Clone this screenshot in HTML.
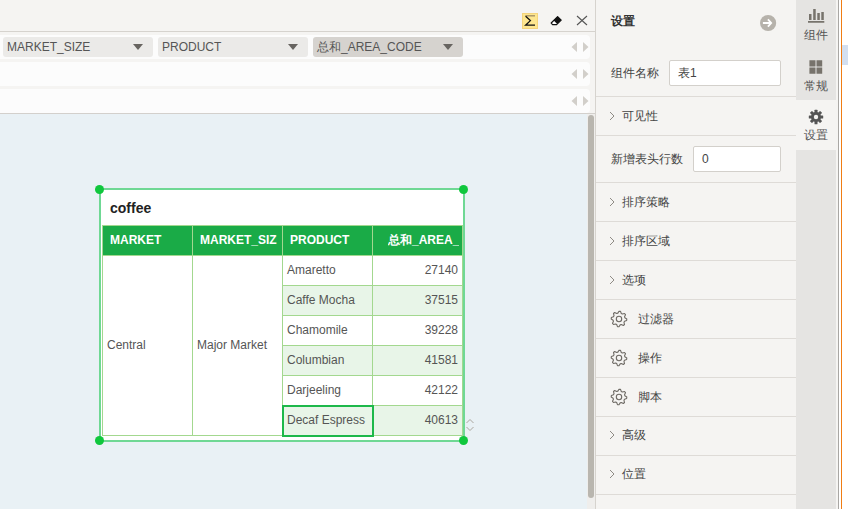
<!DOCTYPE html>
<html><head><meta charset="utf-8">
<style>
*{margin:0;padding:0;box-sizing:border-box}
html,body{width:848px;height:509px;overflow:hidden;background:#fff;font-family:"Liberation Sans",sans-serif;font-size:12px;color:#333}
.a{position:absolute}
#left{left:0;top:0;width:595px;height:509px;background:#f5f4f2;overflow:hidden}
.row{left:0;width:590px;height:24px;background:#fcfcfc;border-radius:0 4px 4px 0}
.dd{top:2px;height:20px;width:150px;background:#ebeae8;border-radius:3px;color:#555;line-height:20px;padding-left:4px;white-space:nowrap}
.dd .tri{position:absolute;right:10px;top:7px;width:0;height:0;border-left:5.5px solid transparent;border-right:5.5px solid transparent;border-top:6px solid #676460}
.arr{left:571px;top:7px;width:18px;height:10px}
.hd{height:30px;line-height:30px;color:#fff;font-weight:bold;white-space:nowrap}
.td{height:29px;line-height:29px;color:#555;white-space:nowrap}
.dot{width:9px;height:9px;border-radius:50%;background:#10c73d}
#panel{left:595px;top:0;width:201px;height:509px;background:#f5f4f2;border-left:1px solid #d6d3ce}
.sep{left:0;width:200px;height:1px;background:#dedbd7}
.lbl{left:15px;color:#444;font-size:12px;line-height:14px;white-space:nowrap}
#side{left:796px;top:0;width:40px;height:509px;background:#e5e4e2}
.tab{left:796px;width:40px;text-align:center;color:#555;font-size:12px;line-height:14px}
</style></head><body>
<div id="left" class="a">
  <div class="a" style="left:0;top:31px;width:595px;height:1px;background:#d6d3ce"></div>
  <div class="a" style="left:522px;top:13px;width:16px;height:16px;background:#fde68f;border:1px solid #f4d47c"></div>
  <svg class="a" style="left:516px;top:8px" width="30" height="24" viewBox="516 8 30 24"><path d="M525.3 15.8 H535" stroke="#a89466" stroke-width="1.4"/><path d="M525.6 16.2 L530.4 20.6 L525.6 25.2 H535" stroke="#111" stroke-width="1.3" fill="none"/></svg>
  <svg class="a" style="left:548px;top:10px" width="16" height="18" viewBox="548 10 16 18"><path d="M557.6 16.6 L561.2 20.1 L556.6 24.6 L552.6 24.6 L551.2 23 Z" fill="#fff" stroke="#111" stroke-width="1.2" stroke-linejoin="round"/><path d="M557.6 16.6 L561.2 20.1 L557.2 24.1 L553.7 20.5 Z" fill="#111"/></svg>
  <svg class="a" style="left:576px;top:15px" width="12" height="11" viewBox="576 15 12 11"><path d="M577 16 L587 25 M587 16 L577 25" stroke="#555" stroke-width="1.1"/></svg>

  <div class="a row" style="top:35px">
    <div class="a dd" style="left:3px">MARKET_SIZE<span class="tri"></span></div>
    <div class="a dd" style="left:158px">PRODUCT<span class="tri"></span></div>
    <div class="a dd" style="left:313px;background:#d6d3cf">总和_AREA_CODE<span class="tri"></span></div>
    <svg class="a arr" viewBox="0 0 18 10"><path d="M6 0 L0.5 5 L6 10Z M12 0 L17.5 5 L12 10Z" fill="#d2cfca"/></svg>
  </div>
  <div class="a row" style="top:62px">
    <svg class="a arr" viewBox="0 0 18 10"><path d="M6 0 L0.5 5 L6 10Z M12 0 L17.5 5 L12 10Z" fill="#d2cfca"/></svg>
  </div>
  <div class="a row" style="top:89px">
    <svg class="a arr" viewBox="0 0 18 10"><path d="M6 0 L0.5 5 L6 10Z M12 0 L17.5 5 L12 10Z" fill="#d2cfca"/></svg>
  </div>
  <div class="a" style="left:0;top:113px;width:595px;height:1px;background:#d3d0cc"></div>
  <div class="a" style="left:0;top:114px;width:587px;height:395px;background:#e9f1f5"></div>
  <div class="a" style="left:587px;top:114px;width:8px;height:395px;background:#efeeec"></div>
  <div class="a" style="left:588px;top:115px;width:6px;height:383px;background:#b9b6af;border-radius:3px"></div>
<div class="a" style="left:99px;top:189px;width:366px;height:253px;background:#fff"></div>
<div class="a" style="left:102px;top:225px;width:361px;height:31px;background:#1aab47"></div>
<div class="a" style="left:283px;top:286px;width:179px;height:29px;background:#e8f5e8"></div>
<div class="a" style="left:283px;top:346px;width:179px;height:29px;background:#e8f5e8"></div>
<div class="a" style="left:283px;top:406px;width:179px;height:29px;background:#e8f5e8"></div>
<div class="a" style="left:102px;top:225px;width:1px;height:211px;background:#a3d88f"></div>
<div class="a" style="left:192px;top:225px;width:1px;height:211px;background:#a3d88f"></div>
<div class="a" style="left:282px;top:225px;width:1px;height:211px;background:#a3d88f"></div>
<div class="a" style="left:372px;top:225px;width:1px;height:211px;background:#a3d88f"></div>
<div class="a" style="left:462px;top:225px;width:1px;height:211px;background:#a3d88f"></div>
<div class="a" style="left:102px;top:225px;width:361px;height:1px;background:#a3d88f"></div>
<div class="a" style="left:102px;top:255px;width:361px;height:1px;background:#a3d88f"></div>
<div class="a" style="left:282px;top:285px;width:181px;height:1px;background:#a3d88f"></div>
<div class="a" style="left:282px;top:315px;width:181px;height:1px;background:#a3d88f"></div>
<div class="a" style="left:282px;top:345px;width:181px;height:1px;background:#a3d88f"></div>
<div class="a" style="left:282px;top:375px;width:181px;height:1px;background:#a3d88f"></div>
<div class="a" style="left:282px;top:405px;width:181px;height:1px;background:#a3d88f"></div>
<div class="a" style="left:102px;top:435px;width:361px;height:1px;background:#a3d88f"></div>
<div class="a hd" style="left:110px;top:225px">MARKET</div>
<div class="a hd" style="left:200px;top:225px;width:77px;overflow:hidden">MARKET_SIZE</div>
<div class="a hd" style="left:290px;top:225px">PRODUCT</div>
<div class="a hd" style="left:388px;top:225px;width:71px;overflow:hidden">总和_AREA_CODE</div>
<div class="a td" style="left:287px;top:256px">Amaretto</div>
<div class="a td" style="left:373px;top:256px;width:85px;text-align:right">27140</div>
<div class="a td" style="left:287px;top:286px">Caffe Mocha</div>
<div class="a td" style="left:373px;top:286px;width:85px;text-align:right">37515</div>
<div class="a td" style="left:287px;top:316px">Chamomile</div>
<div class="a td" style="left:373px;top:316px;width:85px;text-align:right">39228</div>
<div class="a td" style="left:287px;top:346px">Columbian</div>
<div class="a td" style="left:373px;top:346px;width:85px;text-align:right">41581</div>
<div class="a td" style="left:287px;top:376px">Darjeeling</div>
<div class="a td" style="left:373px;top:376px;width:85px;text-align:right">42122</div>
<div class="a td" style="left:287px;top:406px">Decaf Espress</div>
<div class="a td" style="left:373px;top:406px;width:85px;text-align:right">40613</div>
<div class="a td" style="left:107px;top:331px">Central</div>
<div class="a td" style="left:197px;top:331px">Major Market</div>
<div class="a" style="left:282px;top:405px;width:92px;height:32px;border:2px solid #1db84a"></div>
<div class="a" style="left:99px;top:188px;width:366px;height:254px;border:2px solid #6fd894"></div>
<div class="a dot" style="left:95.30px;top:185.00px"></div>
<div class="a dot" style="left:459.40px;top:185.00px"></div>
<div class="a dot" style="left:95.30px;top:436.40px"></div>
<div class="a dot" style="left:459.40px;top:436.40px"></div>
<div class="a" style="left:110px;top:200px;font-size:14px;font-weight:bold;color:#222;line-height:16px">coffee</div>
<svg class="a" style="left:465px;top:417px" width="10" height="16" viewBox="0 0 10 16"><path d="M1.5 6 L5 2.5 L8.5 6 M1.5 10 L5 13.5 L8.5 10" stroke="#aba79f" stroke-width="1" fill="none"/></svg>
</div>

<div id="panel" class="a">
  <div class="a" style="left:15px;top:14px;font-size:12px;font-weight:bold;color:#333;line-height:14px">设置</div>
  <svg class="a" style="left:163px;top:14px" width="18" height="18" viewBox="0 0 18 18"><circle cx="9.1" cy="9.0" r="8.1" fill="#b6b2ab"/><path d="M3.9 9 H12.2 M8.9 5.4 L12.2 9 L8.9 12.6" stroke="#fff" stroke-width="1.8" fill="none"/></svg>
  <div class="a lbl" style="top:66px">组件名称</div>
  <div class="a" style="left:73px;top:60px;width:112px;height:26px;background:#fff;border:1px solid #d3d0cb;border-radius:2px;padding-left:8px;line-height:25px;color:#444">表1</div>
  <div class="a lbl" style="top:152px">新增表头行数</div>
  <div class="a" style="left:97px;top:146px;width:88px;height:26px;background:#fff;border:1px solid #d3d0cb;border-radius:2px;padding-left:8px;line-height:25px;color:#444">0</div>
<div class="a sep" style="top:96px"></div>
<div class="a sep" style="top:135px"></div>
<div class="a sep" style="top:182px"></div>
<div class="a sep" style="top:221px"></div>
<div class="a sep" style="top:260px"></div>
<div class="a sep" style="top:299px"></div>
<div class="a sep" style="top:338px"></div>
<div class="a sep" style="top:377px"></div>
<div class="a sep" style="top:416px"></div>
<div class="a sep" style="top:455px"></div>
<div class="a sep" style="top:494px"></div>
<svg class="a" style="left:13px;top:111px" width="6" height="10" viewBox="0 0 6 10"><path d="M1 1 L5 5 L1 9" stroke="#8f8b85" stroke-width="1" fill="none"/></svg>
<div class="a lbl" style="left:26px;top:109px">可见性</div>
<svg class="a" style="left:13px;top:197px" width="6" height="10" viewBox="0 0 6 10"><path d="M1 1 L5 5 L1 9" stroke="#8f8b85" stroke-width="1" fill="none"/></svg>
<div class="a lbl" style="left:26px;top:195px">排序策略</div>
<svg class="a" style="left:13px;top:236px" width="6" height="10" viewBox="0 0 6 10"><path d="M1 1 L5 5 L1 9" stroke="#8f8b85" stroke-width="1" fill="none"/></svg>
<div class="a lbl" style="left:26px;top:234px">排序区域</div>
<svg class="a" style="left:13px;top:275px" width="6" height="10" viewBox="0 0 6 10"><path d="M1 1 L5 5 L1 9" stroke="#8f8b85" stroke-width="1" fill="none"/></svg>
<div class="a lbl" style="left:26px;top:273px">选项</div>
<svg class="a" style="left:14px;top:310px" width="18" height="18" viewBox="0 0 18 18"><path d="M9.00 1.20 L10.52 1.35 L11.30 3.46 L12.33 4.01 L14.52 3.48 L15.49 4.67 L14.54 6.70 L14.88 7.83 L16.80 9.00 L16.65 10.52 L14.54 11.30 L13.99 12.33 L14.52 14.52 L13.33 15.49 L11.30 14.54 L10.17 14.88 L9.00 16.80 L7.48 16.65 L6.70 14.54 L5.67 13.99 L3.48 14.52 L2.51 13.33 L3.46 11.30 L3.12 10.17 L1.20 9.00 L1.35 7.48 L3.46 6.70 L4.01 5.67 L3.48 3.48 L4.67 2.51 L6.70 3.46 L7.83 3.12Z" stroke="#6f6b65" stroke-width="1.1" fill="none" stroke-linejoin="round"/><circle cx="9" cy="9" r="2.7" stroke="#6f6b65" stroke-width="1.1" fill="none"/></svg>
<div class="a lbl" style="left:42px;top:312px">过滤器</div>
<svg class="a" style="left:14px;top:349px" width="18" height="18" viewBox="0 0 18 18"><path d="M9.00 1.20 L10.52 1.35 L11.30 3.46 L12.33 4.01 L14.52 3.48 L15.49 4.67 L14.54 6.70 L14.88 7.83 L16.80 9.00 L16.65 10.52 L14.54 11.30 L13.99 12.33 L14.52 14.52 L13.33 15.49 L11.30 14.54 L10.17 14.88 L9.00 16.80 L7.48 16.65 L6.70 14.54 L5.67 13.99 L3.48 14.52 L2.51 13.33 L3.46 11.30 L3.12 10.17 L1.20 9.00 L1.35 7.48 L3.46 6.70 L4.01 5.67 L3.48 3.48 L4.67 2.51 L6.70 3.46 L7.83 3.12Z" stroke="#6f6b65" stroke-width="1.1" fill="none" stroke-linejoin="round"/><circle cx="9" cy="9" r="2.7" stroke="#6f6b65" stroke-width="1.1" fill="none"/></svg>
<div class="a lbl" style="left:42px;top:351px">操作</div>
<svg class="a" style="left:14px;top:388px" width="18" height="18" viewBox="0 0 18 18"><path d="M9.00 1.20 L10.52 1.35 L11.30 3.46 L12.33 4.01 L14.52 3.48 L15.49 4.67 L14.54 6.70 L14.88 7.83 L16.80 9.00 L16.65 10.52 L14.54 11.30 L13.99 12.33 L14.52 14.52 L13.33 15.49 L11.30 14.54 L10.17 14.88 L9.00 16.80 L7.48 16.65 L6.70 14.54 L5.67 13.99 L3.48 14.52 L2.51 13.33 L3.46 11.30 L3.12 10.17 L1.20 9.00 L1.35 7.48 L3.46 6.70 L4.01 5.67 L3.48 3.48 L4.67 2.51 L6.70 3.46 L7.83 3.12Z" stroke="#6f6b65" stroke-width="1.1" fill="none" stroke-linejoin="round"/><circle cx="9" cy="9" r="2.7" stroke="#6f6b65" stroke-width="1.1" fill="none"/></svg>
<div class="a lbl" style="left:42px;top:390px">脚本</div>
<svg class="a" style="left:13px;top:430px" width="6" height="10" viewBox="0 0 6 10"><path d="M1 1 L5 5 L1 9" stroke="#8f8b85" stroke-width="1" fill="none"/></svg>
<div class="a lbl" style="left:26px;top:428px">高级</div>
<svg class="a" style="left:13px;top:469px" width="6" height="10" viewBox="0 0 6 10"><path d="M1 1 L5 5 L1 9" stroke="#8f8b85" stroke-width="1" fill="none"/></svg>
<div class="a lbl" style="left:26px;top:467px">位置</div>
</div>
<div id="side" class="a"></div>
<div class="a" style="left:796px;top:100px;width:40px;height:50px;background:#f5f4f2"></div>
<svg class="a" style="left:806px;top:8px" width="22" height="16" viewBox="806 8 22 16"><path d="M809 14 H811.5 V20 H809Z M813.2 9 H815.7 V20 H813.2Z M817.3 13 H819.8 V20 H817.3Z M821.3 12 H823.8 V20 H821.3Z M808 21 H824.3 V22.8 H808Z" fill="#77736c"/></svg>
<div class="a tab" style="top:28px">组件</div>
<svg class="a" style="left:808px;top:59px" width="16" height="16" viewBox="0 0 16 16"><path d="M1.4 1.3 H7.5 V7.4 H1.4Z M8.5 1.3 H14.2 V7.4 H8.5Z M1.4 8.4 H7.5 V14.7 H1.4Z M8.5 8.4 H14.2 V14.7 H8.5Z" fill="#77736c"/></svg>
<div class="a tab" style="top:79px">常规</div>
<svg class="a" style="left:808px;top:109px" width="16" height="16" viewBox="0 0 16 16"><g fill="#555"><circle cx="8" cy="8" r="5"/><g id="t"><rect x="6.5" y="0.8" width="3" height="3.5" rx="0.5"/></g><use href="#t" transform="rotate(45 8 8)"/><use href="#t" transform="rotate(90 8 8)"/><use href="#t" transform="rotate(135 8 8)"/><use href="#t" transform="rotate(180 8 8)"/><use href="#t" transform="rotate(225 8 8)"/><use href="#t" transform="rotate(270 8 8)"/><use href="#t" transform="rotate(315 8 8)"/></g><circle cx="8" cy="8" r="2.2" fill="#f5f4f2"/></svg>
<div class="a tab" style="top:128px">设置</div>
<div class="a" style="left:836px;top:0;width:2px;height:509px;background:#f5f4f2"></div>
<div class="a" style="left:838px;top:0;width:1px;height:509px;background:#a9a7a4"></div>
<div class="a" style="left:841px;top:0;width:1px;height:509px;background:#f07d14"></div>
<div class="a" style="left:842px;top:45px;width:6px;height:20px;background:#d3dff0"></div>
</body></html>
